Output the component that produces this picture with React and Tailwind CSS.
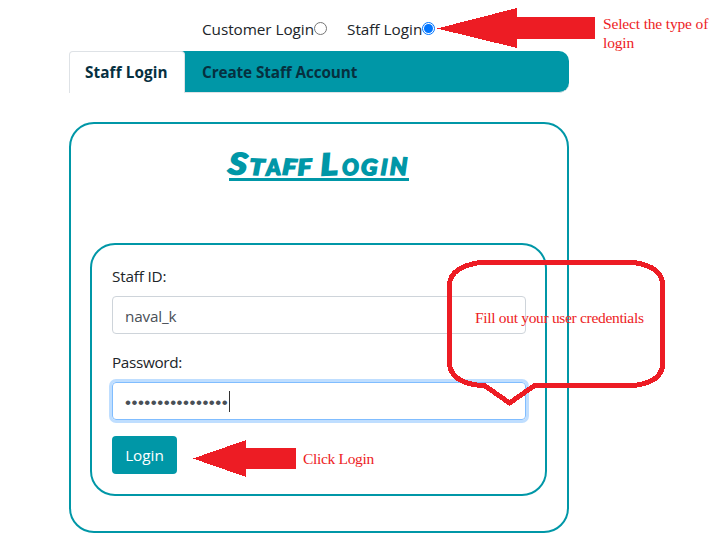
import React from 'react';

const TITLE = [
  ['S', 'text-[30px] rotate-6 w-[22px] translate-x-[2px] scale-x-120'],
  ['t', 'text-[22px] rotate-2 w-[15px] scale-x-120'],
  ['a', 'text-[22px] -rotate-3 w-[18px]'],
  ['f', 'text-[22px] rotate-3 w-[15px] scale-x-120'],
  ['f', 'text-[22px] -rotate-2 w-[16px] scale-x-120'],
  [' ', 'text-[22px] w-[7px]'],
  ['L', 'text-[30px] -rotate-3 w-[20px] scale-x-120'],
  ['o', 'text-[22px] -rotate-3 w-[20px]'],
  ['g', 'text-[22px] rotate-2 w-[19px] scale-x-110'],
  ['i', 'text-[22px] rotate-3 w-[9px]'],
  ['n', 'text-[24px] rotate-1 w-[19px]'],
];

function Radio({ checked }) {
  return (
    <span className={`flex size-[13px] shrink-0 items-center justify-center rounded-full border bg-white ${checked ? 'border-[#0075ff]' : 'border-[#767676]'}`}>
      {checked && <span className="size-[9px] rounded-full bg-[#0075ff]" />}
    </span>
  );
}

function Tabs() {
  return (
    <nav className="flex h-[42px] rounded-[10px] border-b border-[#dee2e6] bg-[#0097a7] text-[#06303f]">
      <div className="h-[42px] w-[116px] shrink-0 rounded-t border border-b-0 border-[#dee2e6] bg-white pt-[8px] pl-[15px] text-[15.3px] leading-6 font-bold">
        <span className="block whitespace-nowrap tracking-[0.1px]">Staff Login</span>
      </div>
      <div className="pt-[9px] pl-[17px] text-[15.3px] leading-6 font-bold">
        <span className="block whitespace-nowrap tracking-[-0.1px]">Create Staff Account</span>
      </div>
    </nav>
  );
}

function LoginForm() {
  return (
    <form className="mr-5 ml-[19px] h-[253px] rounded-[25px] border-2 border-[#0097a7] pr-[19px] pl-5 pt-[19px]">
      <label className="block h-8 text-[15.3px] leading-6 tracking-[-0.2px]">Staff ID:</label>
      <div className="h-[38px] rounded border border-[#ced4da] px-3 pt-[7px] text-[15.3px] leading-6 tracking-[-0.2px] text-[#495057]">naval_k</div>
      <label className="mt-4 block h-8 text-[15.3px] leading-6 tracking-[-0.35px]">Password:</label>
      <div className="flex h-[38px] items-center rounded border border-[#80bdff] px-3 leading-6 text-[#495057] shadow-[0_0_0_3px_#bfdeff]">
        <span className="w-[104px] pt-[4px] font-['Liberation_Sans',sans-serif] text-[17px] tracking-[0.5px] whitespace-nowrap">••••••••••••••••</span>
        <span className="h-[21px] w-px bg-[#333]" />
      </div>
      <button type="button" className="mt-4 block h-[38px] w-[65px] rounded bg-[#0097a7] text-[15.3px] text-white">Login</button>
    </form>
  );
}

function Annotations() {
  return (
    <div className="pointer-events-none absolute inset-0 font-['Liberation_Serif',serif] text-[15.5px] leading-[19px] tracking-[-0.32px] text-[#ed1c24]">
      <svg className="absolute inset-0" width="719" height="540" fill="none" shapeRendering="crispEdges">
        <path d="M437 28.5 517 8v9h78v22h-78v9Z" fill="#ed1c24" />
        <path d="M193 458.5 246 440v8h50v21h-50v8Z" fill="#ed1c24" />
        <path d="M480 262.5H634Q663 267 662.500 285V363Q663 382 634 385.500H534.500L509.500 403 484.500 385.500H480Q450 382 449.500 363V285Q450 267 480 262.500Z" stroke="#ed1c24" strokeWidth="5" />
      </svg>
      <p className="absolute top-[14px] left-[603px] tracking-[-0.16px] whitespace-nowrap">Select the type of<br />login</p>
      <p className="absolute top-[308px] left-[475px] whitespace-nowrap">Fill out your user credentials</p>
      <p className="absolute top-[449px] left-[303px] whitespace-nowrap">Click Login</p>
    </div>
  );
}

export default function App() {
  return (
    <div className="relative h-[540px] w-[719px] overflow-hidden bg-white font-['Open_Sans','Noto_Sans',sans-serif] text-[#212529]">
      <main className="ml-[69px] w-[500px]">
        <div className="flex h-[51px] pt-[17px] pl-[133px] text-[15.3px] leading-6">
          <div className="flex h-6 w-[145px]">
            <span className="w-[112px] tracking-[-0.05px] whitespace-nowrap">Customer Login</span>
            <span className="pt-[5px]"><Radio /></span>
          </div>
          <div className="flex h-6">
            <span className="w-[75px] whitespace-nowrap">Staff Login</span>
            <span className="pt-[5px]"><Radio checked /></span>
          </div>
        </div>
        <Tabs />
        <section className="mt-[29px] h-[411px] rounded-[25px] border-2 border-[#0097a7]">
          <div className="flex h-[119px] justify-center pt-[18px]">
            <h1 className="flex h-[39px] w-[180px] items-baseline border-b-[3px] border-[#0097a7] pt-[2px] font-['Lato',sans-serif] leading-[38px] font-black text-[#0097a7] italic uppercase [-webkit-text-stroke:1.5px_#0097a7]">
              {TITLE.map(([letter, style], i) => (
                <span key={i} className={`inline-block whitespace-pre ${style}`}>{letter}</span>
              ))}
            </h1>
          </div>
          <LoginForm />
        </section>
      </main>
      <Annotations />
    </div>
  );
}
